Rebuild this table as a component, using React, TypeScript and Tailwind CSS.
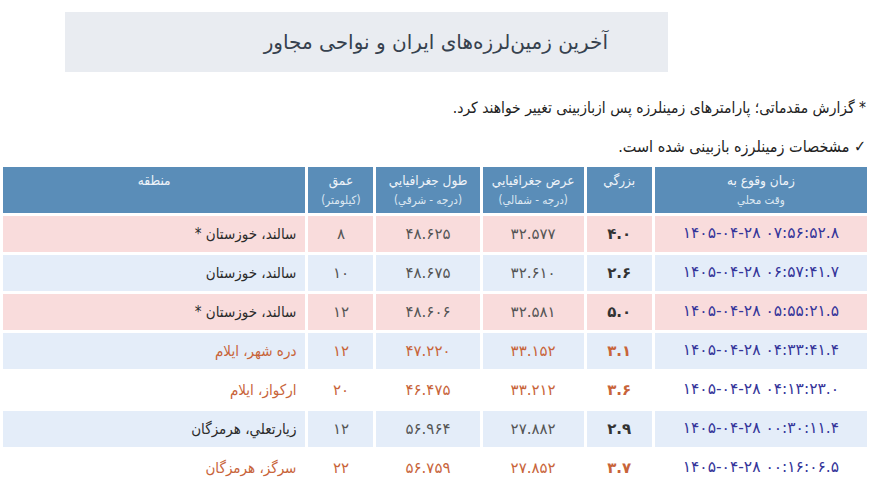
import React from 'react';

type Quake = {
    time: string;
    mag: string;
    lat: string;
    lon: string;
    depth: string;
    region: string;
    bg: 'pink' | 'blue' | 'white';
    tone: 'gray' | 'orange';
};

const quakes: Quake[] = [
    { time: '۱۴۰۵-۰۴-۲۸ ۰۷:۵۶:۵۲.۸', mag: '۴.۰', lat: '۳۲.۵۷۷', lon: '۴۸.۶۲۵', depth: '۸', region: 'سالند، خوزستان *', bg: 'pink', tone: 'gray' },
    { time: '۱۴۰۵-۰۴-۲۸ ۰۶:۵۷:۴۱.۷', mag: '۲.۶', lat: '۳۲.۶۱۰', lon: '۴۸.۶۷۵', depth: '۱۰', region: 'سالند، خوزستان', bg: 'blue', tone: 'gray' },
    { time: '۱۴۰۵-۰۴-۲۸ ۰۵:۵۵:۲۱.۵', mag: '۵.۰', lat: '۳۲.۵۸۱', lon: '۴۸.۶۰۶', depth: '۱۲', region: 'سالند، خوزستان *', bg: 'pink', tone: 'gray' },
    { time: '۱۴۰۵-۰۴-۲۸ ۰۴:۳۳:۴۱.۴', mag: '۳.۱', lat: '۳۳.۱۵۲', lon: '۴۷.۲۲۰', depth: '۱۲', region: 'دره شهر، ایلام', bg: 'blue', tone: 'orange' },
    { time: '۱۴۰۵-۰۴-۲۸ ۰۴:۱۳:۲۳.۰', mag: '۳.۶', lat: '۳۳.۲۱۲', lon: '۴۶.۴۷۵', depth: '۲۰', region: 'ارکواز، ایلام', bg: 'white', tone: 'orange' },
    { time: '۱۴۰۵-۰۴-۲۸ ۰۰:۳۰:۱۱.۴', mag: '۲.۹', lat: '۲۷.۸۸۲', lon: '۵۶.۹۶۴', depth: '۱۲', region: 'زیارتعلي، هرمزگان', bg: 'blue', tone: 'gray' },
    { time: '۱۴۰۵-۰۴-۲۸ ۰۰:۱۶:۰۶.۵', mag: '۳.۷', lat: '۲۷.۸۵۲', lon: '۵۶.۷۵۹', depth: '۲۲', region: 'سرگز، هرمزگان', bg: 'white', tone: 'orange' },
];

const bgClass = {
    pink: 'bg-[#f9dcdc]',
    blue: 'bg-[#e4edf9]',
    white: 'bg-white',
};

const condensed = { fontFamily: '"DejaVu Sans Condensed", "DejaVu Sans", sans-serif' };

function HeaderCell({ title, sub }: { title: string; sub?: string }) {
    return (
        <th className="bg-[#5a8db8] align-top pt-[4px] font-normal text-[#eef3f8]" style={condensed}>
            <div className="text-[13.5px] leading-[19px]">{title}</div>
            {sub && <div className="text-[11.5px] leading-[21px] text-[#dde8f2]">{sub}</div>}
        </th>
    );
}

export default function App() {
    return (
        <div dir="rtl" className="w-[870px] h-[493px] overflow-hidden bg-white pt-[12px]" style={{ fontFamily: '"DejaVu Sans", "Noto Sans", sans-serif' }}>
            <div className="flex justify-end">
                <div className="ml-[65px] mr-[202px] w-[603px] h-[60px] bg-[#e9ecf1] flex items-center justify-start pr-[60px]">
                    <h1 className="text-[20px] text-[#36414e]">آخرین زمین‌لرزه‌های ایران و نواحی مجاور</h1>
                </div>
            </div>

            <div className="mt-[26px] pr-[4px] text-[15.5px] text-[#222] leading-[21px]" style={condensed}>
                <p>* گزارش مقدماتی؛ پارامترهای زمینلرزه پس ازبازبینی تغییر خواهند کرد.</p>
                <p className="mt-[17px] text-[16px]">✓ مشخصات زمینلرزه بازبینی شده است.</p>
            </div>

            <table className="mt-[7px] w-full table-fixed border-separate border-spacing-[3px]">
                <colgroup>
                    <col className="w-[212px]" />
                    <col className="w-[65px]" />
                    <col className="w-[101px]" />
                    <col className="w-[103px]" />
                    <col className="w-[65px]" />
                    <col className="w-[302px]" />
                </colgroup>
                <thead>
                    <tr className="h-[46px]">
                        <HeaderCell title="زمان وقوع به" sub="وقت محلي" />
                        <HeaderCell title="بزرگي" />
                        <HeaderCell title="عرض جغرافیایي" sub="(درجه - شمالي)" />
                        <HeaderCell title="طول جغرافیایي" sub="(درجه - شرقي)" />
                        <HeaderCell title="عمق" sub="(کیلومتر)" />
                        <HeaderCell title="منطقه" />
                    </tr>
                </thead>
                <tbody>
                    {quakes.map((q, i) => {
                        const num = q.tone === 'orange' ? 'text-[#c8643a]' : 'text-[#555]';
                        const mag = q.tone === 'orange' ? 'text-[#c8643a]' : 'text-[#333]';
                        const region = q.tone === 'orange' ? 'text-[#c8643a]' : 'text-[#2b2b2b]';
                        return (
                            <tr key={i} className="h-[36px]">
                                <td className={`${bgClass[q.bg]} text-center text-[15.5px] text-[#35359a]`}>
                                    <span dir="ltr">{q.time}</span>
                                </td>
                                <td className={`${bgClass[q.bg]} text-center text-[15px] font-bold ${mag}`}>{q.mag}</td>
                                <td className={`${bgClass[q.bg]} text-center text-[15px] ${num}`}>{q.lat}</td>
                                <td className={`${bgClass[q.bg]} text-center text-[15px] ${num}`}>{q.lon}</td>
                                <td className={`${bgClass[q.bg]} text-center text-[15px] ${num}`}>{q.depth}</td>
                                <td className={`${bgClass[q.bg]} text-right pr-[9px] text-[15px] ${region}`} style={condensed}>{q.region}</td>
                            </tr>
                        );
                    })}
                </tbody>
            </table>
        </div>
    );
}
